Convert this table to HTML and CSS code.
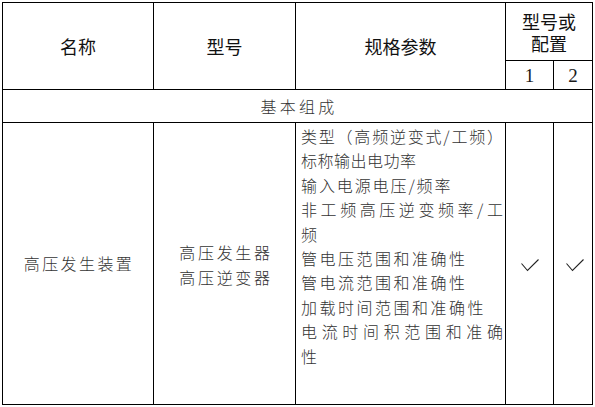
FILE: index.html
```html
<!DOCTYPE html>
<html lang="zh-CN">
<head>
<meta charset="utf-8">
<title>高压发生装置</title>
<link rel="stylesheet" href="styles.css">
</head>
<body>
<table class="spec">
  <colgroup>
    <col class="c1"><col class="c2"><col class="c3"><col class="c4"><col class="c5">
  </colgroup>
  <tr class="r1">
    <th rowspan="2" class="hd">名称</th>
    <th rowspan="2" class="hd">型号</th>
    <th rowspan="2" class="hd">规格参数</th>
    <th colspan="2" class="hd hd-two"><div class="hl">型号或</div><div class="hl">配置</div></th>
  </tr>
  <tr class="r2">
    <th class="num">1</th>
    <th class="num">2</th>
  </tr>
  <tr class="r3">
    <td colspan="5" class="section">基本组成</td>
  </tr>
  <tr class="r4">
    <td class="name">高压发生装置</td>
    <td class="model"><div>高压发生器</div><div>高压逆变器</div></td>
    <td class="params">
      <div class="ln j">类型（高频逆变式/工频）</div>
      <div class="ln tight">标称输出电功率</div>
      <div class="ln mid">输入电源电压/频率</div>
      <div class="ln j">非工频高压逆变频率/工</div>
      <div class="ln">频</div>
      <div class="ln">管电压范围和准确性</div>
      <div class="ln">管电流范围和准确性</div>
      <div class="ln">加载时间范围和准确性</div>
      <div class="ln j">电流时间积范围和准确</div>
      <div class="ln">性</div>
    </td>
    <td class="chk"><svg class="tick" width="20" height="14" viewBox="0 0 20 14"><polyline points="1.5,5.5 7.5,12.5 18.5,1.5" fill="none" stroke="#222" stroke-width="1.1"/></svg></td>
    <td class="chk chk2"><svg class="tick" width="20" height="14" viewBox="0 0 20 14"><polyline points="1.5,5.5 7.5,12.5 18.5,1.5" fill="none" stroke="#222" stroke-width="1.1"/></svg></td>
  </tr>
</table>
</body>
</html>
```
FILE: styles.css
```css
html, body {
  margin: 0;
  padding: 0;
  background: #fff;
}
body {
  padding: 2px 0 0 2px;
}
.spec {
  border-collapse: collapse;
  table-layout: fixed;
  width: 591px;
  color: #1a1a1a;
  font-family: "Noto Sans CJK SC", "Noto Sans", sans-serif;
}
.c1 { width: 151px; }
.c2 { width: 142px; }
.c3 { width: 210px; }
.c4 { width: 48px; }
.c5 { width: 39px; }
.spec th, .spec td {
  border: 1px solid #000;
  padding: 0;
  text-align: center;
  vertical-align: middle;
}
.r1 { height: 58px; }
.r2 { height: 29px; }
.r3 { height: 33px; }
.r4 { height: 282px; }
.spec .hd {
  font-size: 18px;
  font-weight: 400;
  line-height: 23px;
  color: #111;
}
.spec .hd-two {
  padding-top: 0;
}
.hl {
  height: 22px;
  line-height: 22px;
  overflow: visible;
}
.spec .num {
  font-family: "Liberation Serif", "Times New Roman", serif;
  font-size: 19px;
  font-weight: 400;
  line-height: 26px;
  padding-top: 2px;
}
.spec .section {
  font-size: 16px;
  font-weight: 300;
  letter-spacing: 3.3px;
  line-height: 24px;
  padding-left: 3px;
  color: #333;
}
.spec .name, .spec .model {
  font-size: 16px;
  font-weight: 300;
  line-height: 24.5px;
  color: #333;
}
.spec .name { letter-spacing: 2.4px; padding-left: 2px; }
.spec .model { letter-spacing: 2.7px; padding-left: 3px; padding-top: 2px; }
.spec .params {
  text-align: left;
  vertical-align: top;
  font-size: 16px;
  font-weight: 300;
  line-height: 24.4px;
  color: #333;
  padding: 1px 0 0 5px;
}
.params .ln {
  letter-spacing: 2.5px;
  white-space: nowrap;
}
.params .ln.j {
  letter-spacing: 0;
  text-align: justify;
  text-align-last: justify;
  padding-right: 2px;
}
.params .ln.tight { letter-spacing: 0.5px; }
.params .ln.mid { letter-spacing: 1.9px; }
.spec .chk { line-height: 0; padding-top: 2px; }
.spec .chk2 { padding-left: 3px; }
.tick { display: inline-block; }
```
